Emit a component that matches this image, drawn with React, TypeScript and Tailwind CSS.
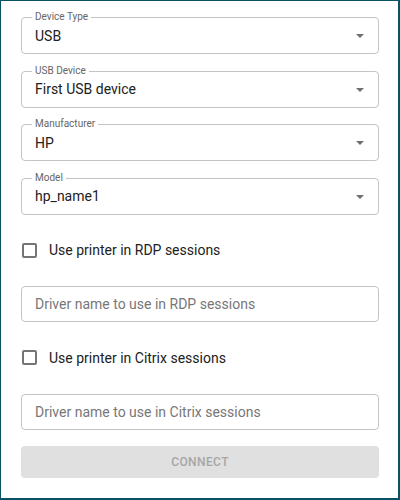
import { useState } from "react";

const selects = [
    { label: "Device Type", value: "USB" },
    { label: "USB Device", value: "First USB device" },
    { label: "Manufacturer", value: "HP" },
    { label: "Model", value: "hp_name1" },
];

function OutlinedSelect({ label, value }: { label: string; value: string }) {
    return (
        <div className="relative flex h-[37px] items-center rounded-[4px] border border-[#c4c4c4] pl-[13px] pr-[14px]">
            <span className="absolute -top-[7px] left-[10px] bg-white px-[3px] text-[10px] leading-[12px] text-[#666]">
                {label}
            </span>
            <span className="flex-1 text-[14px] leading-[20px] text-[#212121]">{value}</span>
            <svg width="8" height="4" viewBox="0 0 8 4" className="mt-[1px]">
                <path d="M0 0 L8 0 L4 4 Z" fill="#6f6f6f" />
            </svg>
        </div>
    );
}

function CheckRow({ label }: { label: string }) {
    const [checked, setChecked] = useState(false);
    return (
        <label className="mt-[19.5px] flex h-[32px] cursor-pointer items-center gap-[12px] pl-[1px]">
            <input
                type="checkbox"
                checked={checked}
                onChange={(e) => setChecked(e.target.checked)}
                className="h-[15px] w-[15px] appearance-none rounded-[2px] border-2 border-[#757575] checked:bg-[#757575]"
            />
            <span className="text-[14px] leading-[20px] text-[#212121]">{label}</span>
        </label>
    );
}

function TextInput({ placeholder }: { placeholder: string }) {
    return (
        <input
            placeholder={placeholder}
            className="mt-[20px] h-[36px] w-full rounded-[4px] border border-[#c4c4c4] px-[13px] text-[14px] text-[#212121] outline-none placeholder:text-[#777]"
        />
    );
}

export default function App() {
    return (
        <div
            className="flex h-[500px] w-[400px] flex-col border border-r-2 border-b-2 border-[#0b5166] bg-white pl-[20px] pr-[19px] pt-[16px]"
            style={{ fontFamily: "Roboto, 'Liberation Sans', sans-serif" }}
        >
            <div className="flex flex-col gap-[16.5px]">
                {selects.map((s) => (
                    <OutlinedSelect key={s.label} label={s.label} value={s.value} />
                ))}
            </div>

            <CheckRow label="Use printer in RDP sessions" />
            <TextInput placeholder="Driver name to use in RDP sessions" />

            <CheckRow label="Use printer in Citrix sessions" />
            <TextInput placeholder="Driver name to use in Citrix sessions" />

            <button
                disabled
                className="mt-[16.5px] h-[32px] w-full rounded-[4px] bg-[#e0e0e0] text-[12px] font-medium tracking-[0.4px] text-[#a6a6a6]"
            >
                CONNECT
            </button>
        </div>
    );
}
